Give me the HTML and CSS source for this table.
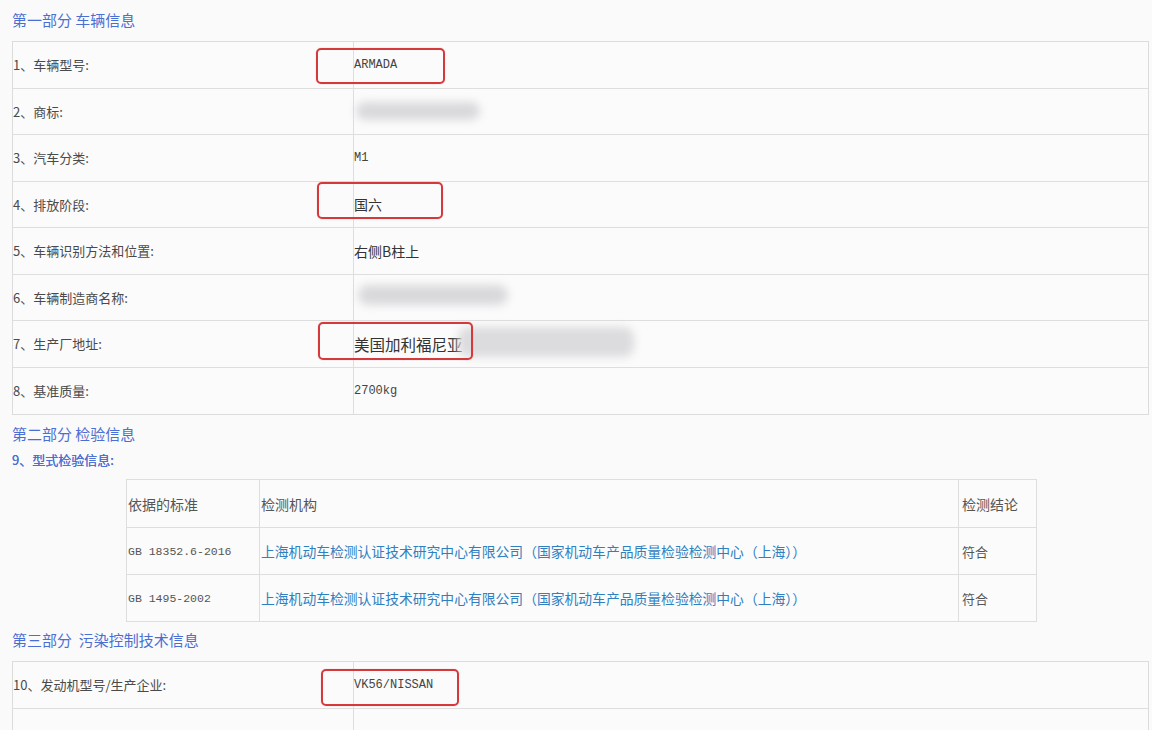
FILE: index.html
```html
<!DOCTYPE html>
<html lang="zh-CN">
<head>
<meta charset="utf-8">
<title>车辆信息</title>
<link rel="stylesheet" href="styles.css">
</head>
<body>
<div class="page">
  <h2 class="section-title">第一部分 车辆信息</h2>
  <div class="info-table">
    <div class="row">
      <div class="label">1、车辆型号:</div>
      <div class="value mono">ARMADA<span class="mark mark-1"></span></div>
    </div>
    <div class="row">
      <div class="label">2、商标:</div>
      <div class="value"><span class="blur blur-2"></span></div>
    </div>
    <div class="row">
      <div class="label">3、汽车分类:</div>
      <div class="value mono">M1</div>
    </div>
    <div class="row">
      <div class="label">4、排放阶段:</div>
      <div class="value cjk">国六<span class="mark mark-4"></span></div>
    </div>
    <div class="row">
      <div class="label">5、车辆识别方法和位置:</div>
      <div class="value cjk">右侧B柱上</div>
    </div>
    <div class="row">
      <div class="label">6、车辆制造商名称:</div>
      <div class="value"><span class="blur blur-6"></span></div>
    </div>
    <div class="row">
      <div class="label">7、生产厂地址:</div>
      <div class="value cjk cjk-large">美国加利福尼亚<span class="blur blur-7"></span><span class="mark mark-7"></span></div>
    </div>
    <div class="row">
      <div class="label">8、基准质量:</div>
      <div class="value mono">2700kg</div>
    </div>
  </div>

  <h2 class="section-title">第二部分 检验信息</h2>
  <h3 class="sub-title">9、型式检验信息:</h3>
  <table class="test-table">
    <colgroup>
      <col class="c-std"><col class="c-org"><col class="c-res">
    </colgroup>
    <tr class="head">
      <td>依据的标准</td>
      <td>检测机构</td>
      <td>检测结论</td>
    </tr>
    <tr>
      <td class="mono-sm">GB 18352.6-2016</td>
      <td><a class="org-link" href="#">上海机动车检测认证技术研究中心有限公司（国家机动车产品质量检验检测中心（上海））</a></td>
      <td>符合</td>
    </tr>
    <tr class="last">
      <td class="mono-sm">GB 1495-2002</td>
      <td><a class="org-link" href="#">上海机动车检测认证技术研究中心有限公司（国家机动车产品质量检验检测中心（上海））</a></td>
      <td>符合</td>
    </tr>
  </table>

  <h2 class="section-title section-third">第三部分&nbsp; 污染控制技术信息</h2>
  <div class="info-table open">
    <div class="row">
      <div class="label">10、发动机型号/生产企业:</div>
      <div class="value mono">VK56/NISSAN<span class="mark mark-10"></span></div>
    </div>
    <div class="row">
      <div class="label"></div>
      <div class="value"></div>
    </div>
  </div>
</div>
</body>
</html>
```
FILE: styles.css
```css
html, body {
  margin: 0;
  padding: 0;
  background: #fafafa;
}
body {
  font-family: "Noto Sans CJK SC", "Noto Sans", sans-serif;
  color: #444;
  overflow: hidden;
}
.page {
  padding: 7px 3px 0 12px;
  width: 1137px;
}
.section-title {
  margin: 6px 0 7px;
  font-size: 15px;
  font-weight: normal;
  line-height: 26px;
  color: #4a6fd4;
}
.page > .section-title:first-child {
  margin: 0 0 8px;
}
.section-title.section-third {
  margin: 5px 0 8px;
}
.sub-title {
  margin: -7px 0 6px;
  font-size: 13px;
  font-weight: normal;
  line-height: 26px;
  color: #4a6fd4;
  text-shadow: 0 0 0.4px #4a6fd4;
}
.info-table {
  border: 1px solid #dcdcdc;
  background: #fbfbfb;
}
.info-table.open {
  border-bottom: none;
}
.row {
  display: flex;
  box-sizing: border-box;
  height: 46.5px;
  border-bottom: 1px solid #dedede;
}
.row:last-child {
  border-bottom: none;
}
.label {
  width: 340px;
  flex: none;
  display: flex;
  align-items: center;
  font-size: 13px;
  color: #4a4a4a;
  border-right: 1px solid #dedede;
}
.value {
  position: relative;
  flex: 1;
  display: flex;
  align-items: center;
  font-size: 13px;
  color: #333;
}
.value.mono {
  font-family: "Liberation Mono", monospace;
  font-size: 12px;
  color: #444;
}
.value.cjk {
  font-size: 14px;
}
.value.cjk-large {
  font-size: 15.5px;
}
.mark {
  position: absolute;
  border: 2px solid #d5393b;
  border-radius: 5px;
  box-shadow: 0 0 1px rgba(213, 57, 59, 0.5);
}
.mark-1 { left: -38px; top: 6px; width: 125px; height: 32px; }
.mark-4 { left: -37px; top: 0px; width: 122px; height: 33px; }
.mark-7 { left: -36px; top: 1px; width: 151px; height: 34px; }
.mark-10 { left: -33px; top: 7px; width: 134px; height: 33px; }
.blur {
  position: absolute;
  background: #d9d9dc;
  filter: blur(4px);
  border-radius: 10px;
}
.blur-2 { left: 2px; top: 13px; width: 124px; height: 18px; }
.blur-6 { left: 4px; top: 10px; width: 150px; height: 20px; }
.blur-7 { left: 104px; top: 6px; width: 176px; height: 30px; background: #dcdcdf; }

.test-table {
  margin-left: 114px;
  width: 910px;
  border-collapse: collapse;
  table-layout: fixed;
  background: #fbfbfb;
  font-size: 13px;
  color: #555;
}
.c-std { width: 133px; }
.c-org { width: 699px; }
.c-res { width: 78px; }
.test-table td {
  border: 1px solid #dedede;
  padding: 0 0 0 1px;
  height: 46px;
  vertical-align: middle;
  white-space: nowrap;
}
.test-table tr.head td {
  height: 47px;
  font-size: 14px;
}
.test-table tr td:nth-child(3) {
  padding-left: 3px;
}
.mono-sm {
  font-family: "Liberation Mono", monospace;
  font-size: 11.5px;
  color: #555;
}
.org-link {
  color: #2f80c0;
  text-decoration: none;
  font-size: 13.8px;
}
```
